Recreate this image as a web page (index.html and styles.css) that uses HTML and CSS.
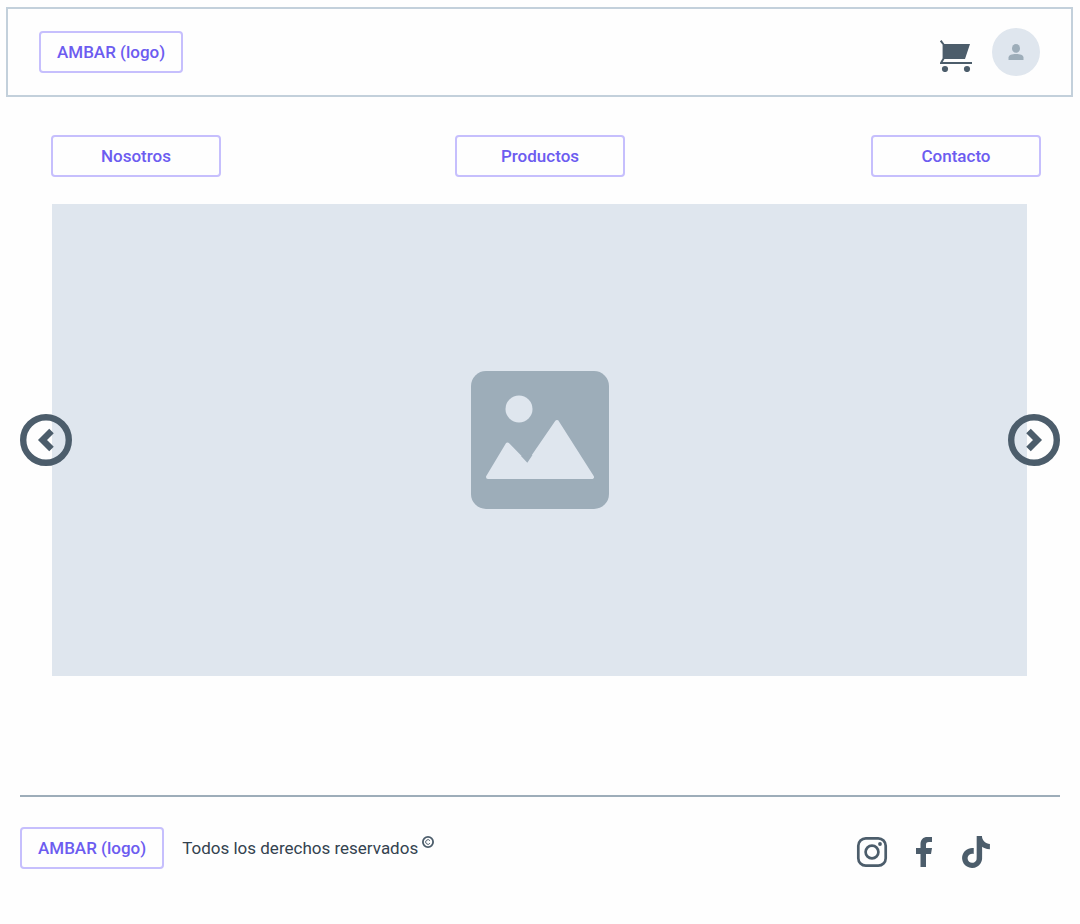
FILE: index.html
```html
<!DOCTYPE html>
<html lang="es">
<head>
  <meta charset="utf-8">
  <meta name="viewport" content="width=device-width, initial-scale=1">
  <title>AMBAR</title>
  <link rel="stylesheet" href="styles.css">
</head>
<body>
  <header class="topbar">
    <a class="box" href="#">AMBAR (logo)</a>
    <div class="actions">
      <button class="icon-button cart" type="button" aria-label="Carrito">
        <svg viewBox="0 0 32 32" width="32" height="32" fill="currentColor">
          <path d="M3 4H30L25 19H3z"/>
          <path d="M.7.7L3.6 4.5V18.5L1 22.9H32" fill="none" stroke="currentColor" stroke-width="2"/>
          <circle cx="5" cy="29" r="3.1"/>
          <circle cx="27" cy="29" r="3.1"/>
        </svg>
      </button>
      <button class="icon-button avatar" type="button" aria-label="Cuenta">
        <svg viewBox="0 0 48 48" width="48" height="48" fill="currentColor">
          <ellipse cx="24" cy="20.4" rx="4" ry="4.3"/>
          <path d="M16.500 32v-2.500c0-2.400 3.500-3.500 7.500-3.500s7.500 1.100 7.500 3.500v2.500z"/>
        </svg>
      </button>
    </div>
  </header>

  <nav class="menu" aria-label="Principal">
    <a class="box menu-item" href="#">Nosotros</a>
    <a class="box menu-item" href="#">Productos</a>
    <a class="box menu-item" href="#">Contacto</a>
  </nav>

  <main class="carousel">
    <div class="slide">
      <svg class="placeholder" viewBox="0 0 138 138" width="138" height="138" role="img" aria-label="Imagen">
        <rect width="138" height="138" rx="15" fill="#9dadb9"/>
        <circle cx="48" cy="38" r="13.500" fill="#dfe6ee"/>
        <path d="M17 106L36.500 73.500L56.500 94L86 51L121 106z" fill="#dfe6ee" stroke="#dfe6ee" stroke-width="4" stroke-linejoin="round"/>
        <path d="M50 85L56.300 91.700L61.500 84z" fill="#9dadb9"/>
      </svg>
    </div>
    <button class="icon-button arrow arrow-prev" type="button" aria-label="Anterior">
      <svg viewBox="0 0 52 52" width="52" height="52" fill="none" stroke="currentColor" stroke-width="6.400">
        <circle cx="26" cy="26" r="22.800"/>
        <path d="M31.500 17L22.500 26L31.500 35"/>
      </svg>
    </button>
    <button class="icon-button arrow arrow-next" type="button" aria-label="Siguiente">
      <svg viewBox="0 0 52 52" width="52" height="52" fill="none" stroke="currentColor" stroke-width="6.400">
        <circle cx="26" cy="26" r="22.800"/>
        <path d="M20.500 17L29.500 26L20.500 35"/>
      </svg>
    </button>
  </main>

  <footer class="footer">
    <a class="box" href="#">AMBAR (logo)</a>
    <p class="rights">Todos los derechos reservados
      <svg class="copyright" viewBox="0 0 12 12" width="12" height="12" fill="none" stroke="currentColor" role="img" aria-label="Copyright">
        <circle cx="6" cy="6" r="5.100" stroke-width="1.800"/>
        <path d="M7.900 4.700A2.300 2.300 0 1 0 7.900 7.300"/>
      </svg>
    </p>
    <div class="social">
      <a href="#" aria-label="Instagram">
        <svg viewBox="0 0 32 32" width="32" height="32" fill="none" stroke="currentColor" stroke-width="2.700">
          <rect x="2.300" y="2.300" width="27.400" height="27.400" rx="7.500"/>
          <circle cx="16" cy="16" r="6.400"/>
          <circle cx="24" cy="8" r="1.900" fill="currentColor" stroke="none"/>
        </svg>
      </a>
      <a href="#" aria-label="Facebook">
        <svg viewBox="0 0 32 32" width="32" height="32" fill="currentColor">
          <path d="M12.500 31V18H8v-6h4.500V8.500C12.500 3.500 15 1 19.500 1H24v5h-3c-2.500 0-3 1-3 3v3h6l-1 6h-5v13z"/>
        </svg>
      </a>
      <a href="#" aria-label="TikTok">
        <svg viewBox="0 0 24 24" width="32" height="32" fill="currentColor">
          <path d="M12.525.02c1.310-.02 2.610-.01 3.910-.02.08 1.530.63 3.090 1.750 4.170 1.120 1.110 2.700 1.620 4.240 1.790v4.030c-1.440-.05-2.890-.35-4.200-.97-.57-.26-1.100-.59-1.620-.93-.01 2.920.01 5.840-.02 8.750-.08 1.400-.54 2.790-1.350 3.940-1.310 1.920-3.580 3.170-5.910 3.210-1.430.08-2.860-.31-4.080-1.030-2.020-1.190-3.440-3.370-3.650-5.710-.02-.5-.03-1-.01-1.490.18-1.900 1.120-3.720 2.580-4.960 1.660-1.440 3.980-2.130 6.150-1.720.02 1.480-.04 2.960-.04 4.440-.99-.32-2.150-.23-3.020.37-.63.41-1.110 1.040-1.360 1.750-.21.51-.15 1.070-.14 1.610.24 1.640 1.820 3.020 3.500 2.870 1.120-.01 2.190-.66 2.770-1.610.19-.33.4-.67.41-1.060.1-1.790.06-3.570.07-5.360.01-4.030-.01-8.050.02-12.070z"/>
        </svg>
      </a>
    </div>
  </footer>
</body>
</html>
```

FILE: styles.css
```css
* {
  box-sizing: border-box;
}

body {
  margin: 0;
  background: #fefefe;
  color: #33424f;
  font-family: Roboto, "Liberation Sans", sans-serif;
  font-size: 17px;
  line-height: 24px;
}

svg {
  display: block;
}

.box {
  padding: 7px 16px;
  border: 2px solid #c6bffd;
  border-radius: 4px;
  color: #6c5cf0;
  font-weight: 500;
  text-align: center;
  text-decoration: none;
  white-space: nowrap;
}

.icon-button {
  padding: 0;
  border: 0;
  background: none;
  color: #4c5d6b;
  cursor: pointer;
}

.topbar {
  display: flex;
  align-items: center;
  justify-content: space-between;
  margin: 7px 7px 0 6px;
  padding: 19px 31px;
  border: 2px solid #c3d0db;
}

.actions {
  display: flex;
  align-items: flex-end;
  gap: 20px;
}

.cart {
  padding-bottom: 4px;
}

.avatar {
  border-radius: 50%;
  background: #dfe6ee;
  color: #9dadb9;
}

.menu {
  display: grid;
  grid-template-columns: 1fr auto 1fr;
  padding: 38px 39px 27px;
}

.menu-item {
  width: 170px;
  padding: 7px 0;
}

.menu-item:first-child {
  margin-left: 12px;
}

.menu-item:last-child {
  justify-self: end;
}

.carousel {
  position: relative;
  margin: 0 20px;
  padding: 0 33px 0 32px;
}

.slide {
  display: grid;
  place-items: center;
  aspect-ratio: 975 / 472;
  background: #dfe6ee;
}

.arrow {
  position: absolute;
  top: calc(50% - 26px);
}

.arrow-prev {
  left: 0;
}

.arrow-next {
  right: 0;
}

.footer {
  display: flex;
  align-items: center;
  gap: 18px;
  margin: 119px 20px 0;
  padding: 30px 68px 30px 0;
  border-top: 2px solid #9dadb9;
}

.rights {
  display: flex;
  gap: 4px;
  margin: 0;
}

.copyright {
  color: #4c5d6b;
}

.social {
  display: flex;
  align-self: flex-end;
  gap: 20px;
  margin-left: auto;
  padding-bottom: 1px;
}

.social a {
  color: #4c5d6b;
}
```
